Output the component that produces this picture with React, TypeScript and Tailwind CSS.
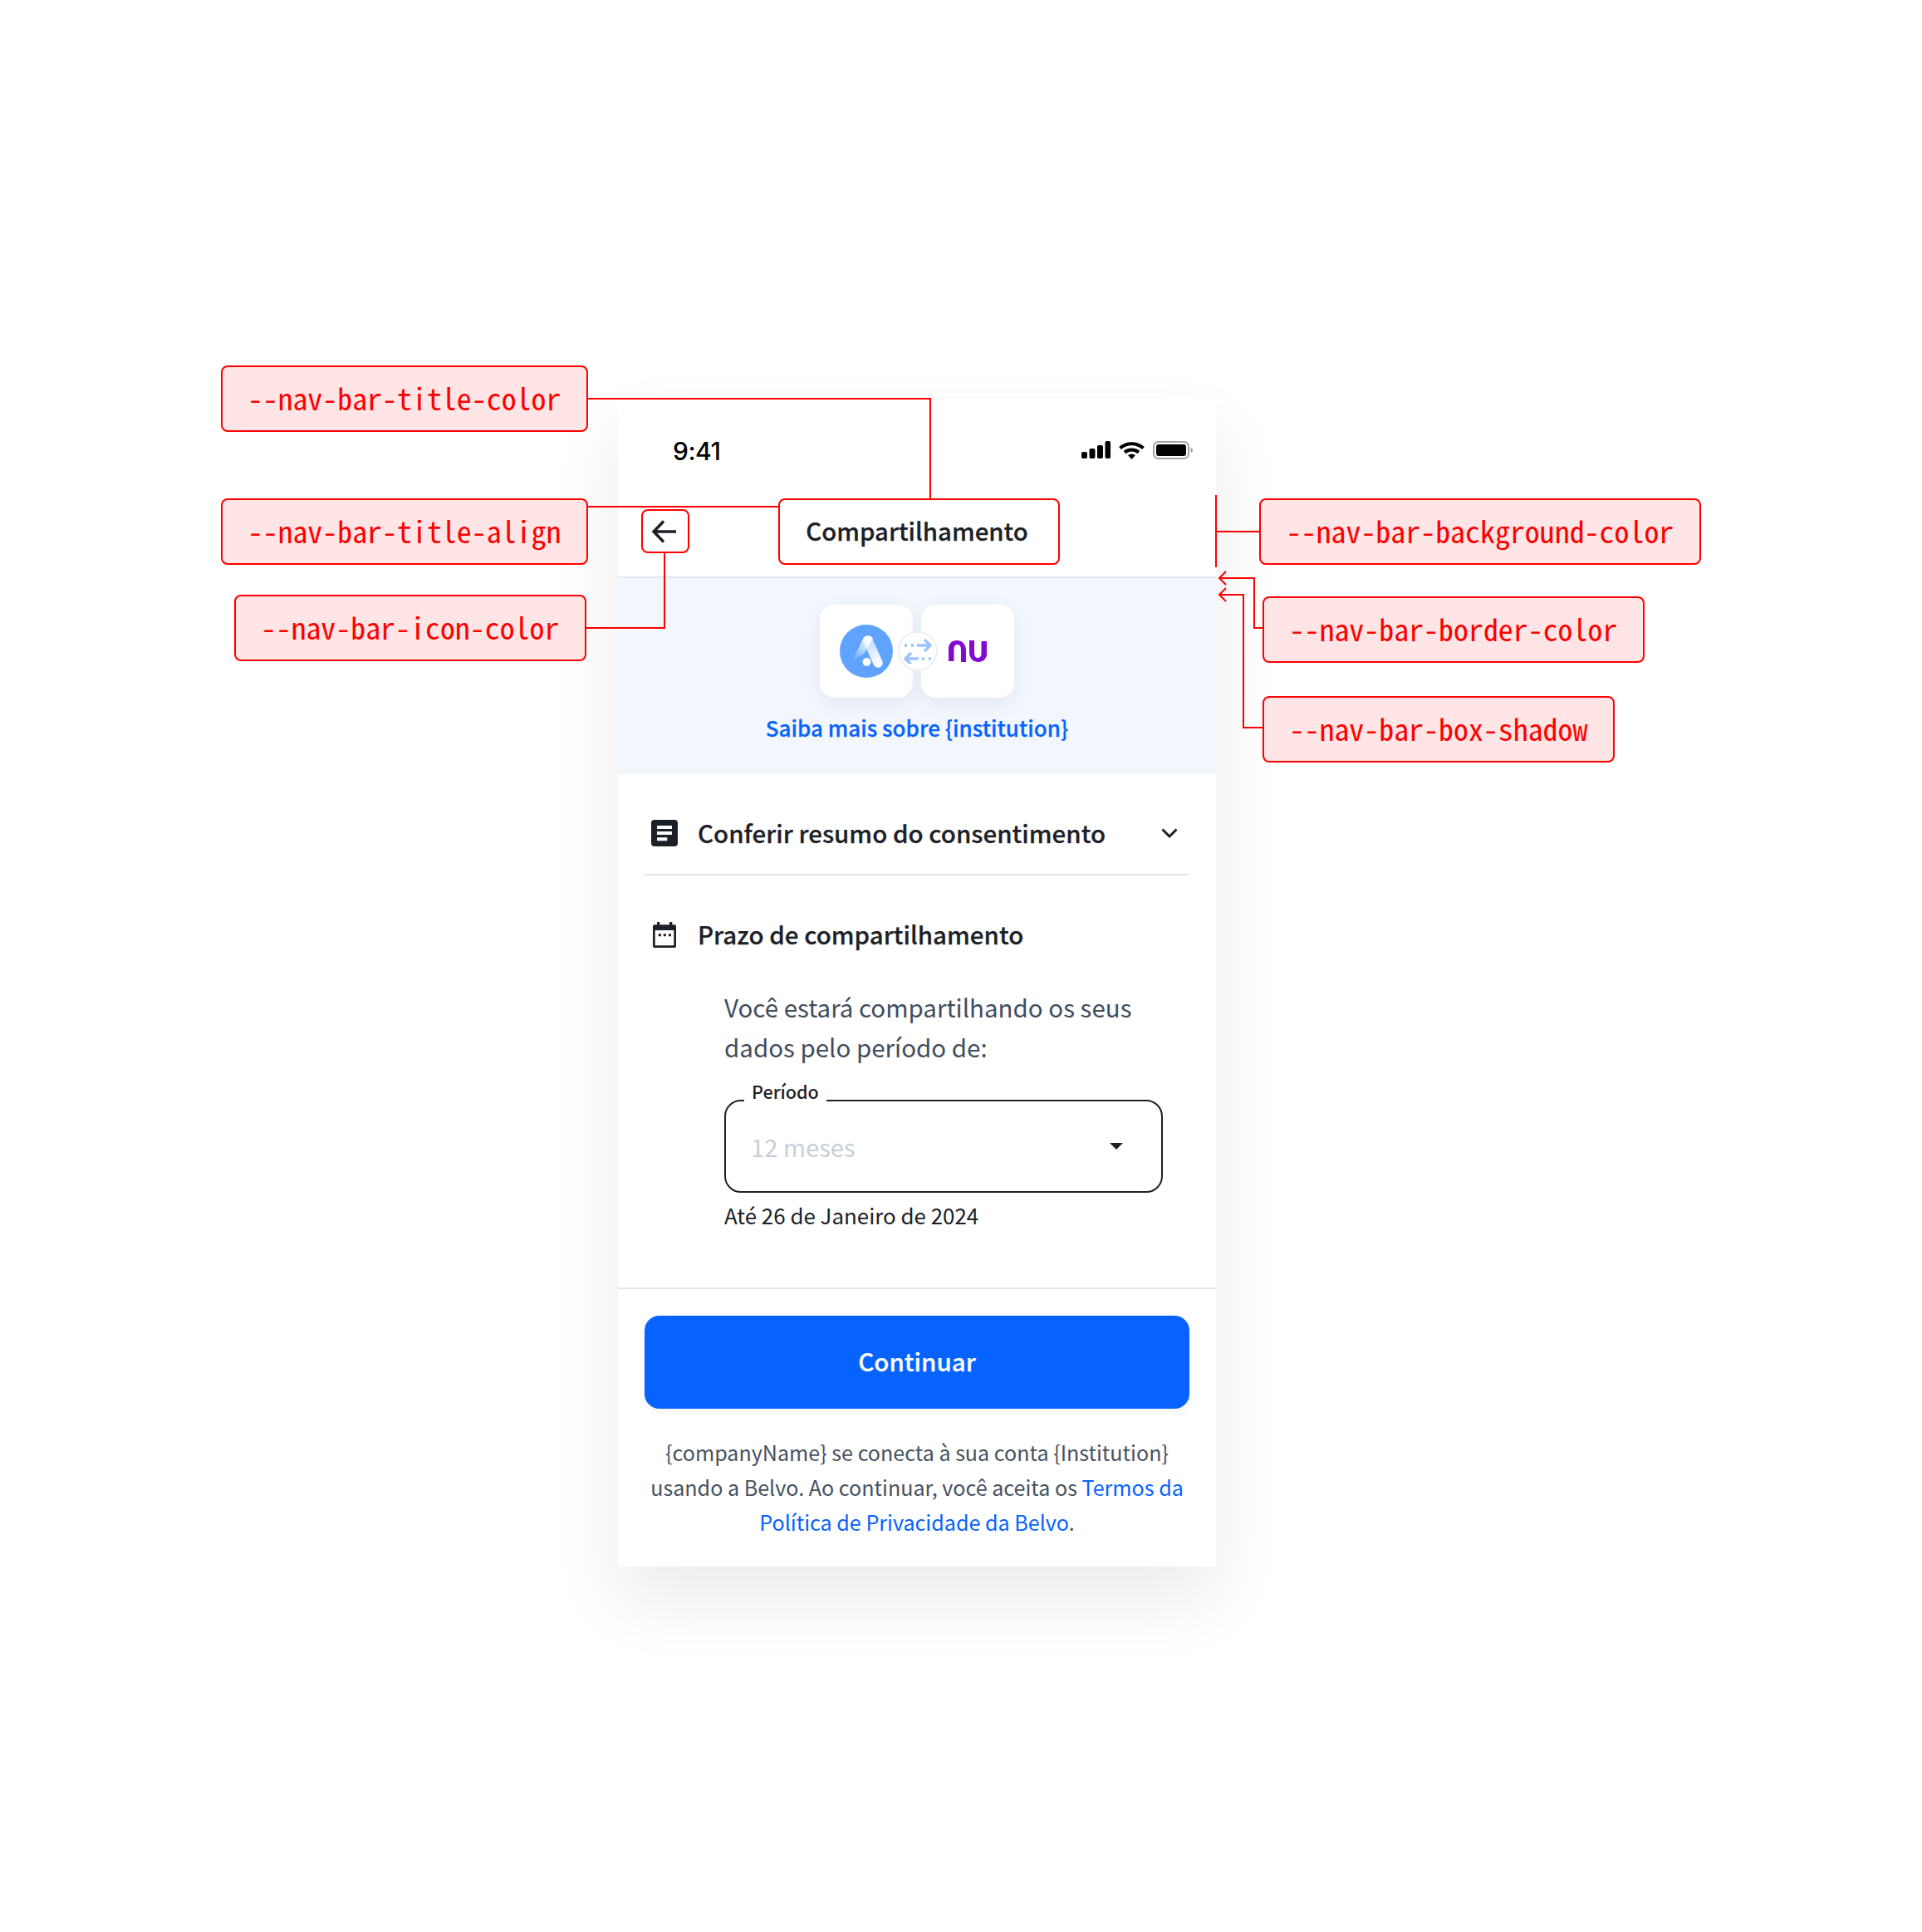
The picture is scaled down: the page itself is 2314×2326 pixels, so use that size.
const sans = "font-['Noto_Sans_CJK_SC','Noto_Sans',sans-serif]";
const heading = "font-medium [-webkit-text-stroke:0.25px_currentColor]";

function Label({ className, children }: { className: string; children: string }) {
  return (
    <div
      className={`absolute flex items-center justify-center rounded-lg border-2 border-[#ff0000] bg-[#ffe5e5] pb-[2px] font-['Noto_Sans_Mono_CJK_SC','Liberation_Mono',monospace] text-[35.9px] font-medium text-[#ff0000] ${className}`}
    >
      {children}
    </div>
  );
}

function StatusIcons() {
  return (
    <div className="mt-[1px] flex items-center gap-[10px]">
      <svg width="35" height="22" viewBox="0 0 35 22" fill="#000">
        <rect x="0" y="13" width="7" height="8" rx="2" />
        <rect x="9.5" y="9" width="7" height="12" rx="2" />
        <rect x="19" y="5" width="7" height="16" rx="2" />
        <rect x="28.5" y="0" width="6.5" height="21" rx="2" />
      </svg>
      <svg width="31" height="22" viewBox="0 0 31 22">
        <path d="M1.5 8.5 C9.5 1.5 21.5 1.5 29.5 8.5" fill="none" stroke="#000" strokeWidth="4.2" />
        <path d="M7 13.5 C12 9.5 19 9.5 24 13.5" fill="none" stroke="#000" strokeWidth="4.2" />
        <path d="M11 17 C14 15 17 15 20 17 L15.5 22 Z" fill="#000" />
      </svg>
      <svg width="48" height="22" viewBox="0 0 48 22">
        <rect x="1" y="1" width="42" height="20" rx="5.5" fill="none" stroke="#a3a3a3" strokeWidth="2" />
        <rect x="4" y="4" width="36" height="14" rx="3" fill="#000" />
        <path d="M45.5 8 C47.5 8.5 48 9.5 48 11 C48 12.5 47.5 13.5 45.5 14 Z" fill="#a3a3a3" />
      </svg>
    </div>
  );
}

function ProductLogo() {
  return (
    <svg width="64" height="64" viewBox="0 0 64 64">
      <defs>
        <linearGradient id="wedge" x1="33" y1="16" x2="16" y2="44" gradientUnits="userSpaceOnUse">
          <stop offset="0" stopColor="#fff" stopOpacity="0.95" />
          <stop offset="1" stopColor="#fff" stopOpacity="0" />
        </linearGradient>
        <linearGradient id="leg" x1="33" y1="16" x2="46" y2="47" gradientUnits="userSpaceOnUse">
          <stop offset="0" stopColor="#fff" stopOpacity="0.55" />
          <stop offset="1" stopColor="#fff" />
        </linearGradient>
      </defs>
      <circle cx="32" cy="32" r="32" fill="#5fa3ff" />
      <path d="M28 17 C30 12 38 12 40 17 L29 35 L15 44 Z" fill="url(#wedge)" />
      <path d="M34 19 L46 46" stroke="url(#leg)" strokeWidth="11.5" strokeLinecap="round" fill="none" />
      <circle cx="32.5" cy="45" r="5" fill="#fff" />
    </svg>
  );
}

function NuLogo() {
  const arch = "M0 25 V10 C0 4 4 0 10 0 C17 0 21 5 21 12 V26 H15 V11 C15 7 13.5 5 11 5 C8 5 6.5 7 6.5 10 V25 Z";
  return (
    <svg width="46" height="26" viewBox="0 0 46 26" fill="#820ad1">
      <path d={arch} />
      <path d={arch} transform="rotate(180 23 13)" />
    </svg>
  );
}

function ExchangeBadge() {
  return (
    <div className="absolute left-[94px] top-[32px] flex h-[48px] w-[48px] items-center justify-center rounded-full border-2 border-[#edf0f3] bg-white">
      <svg width="34" height="30" viewBox="0 0 34 30" fill="none" stroke="#9cc2ff" strokeWidth="3.4">
        <path d="M1 8 h3 M9 8 h3" />
        <path d="M16 8 H32 M25 1 L32 8 L25 15" />
        <path d="M33 24 h-3 M25 24 h-3" />
        <path d="M18 24 H2 M9 17 L2 24 L9 31" />
      </svg>
    </div>
  );
}

function Overlay() {
  return (
    <svg className="pointer-events-none absolute inset-0" width="2314" height="2326" fill="none" stroke="#ff0000" strokeWidth="2">
      <path d="M707 480 H1120 V601" />
      <path d="M707 610 H937" />
      <path d="M800 665 V756 H705" />
      <path d="M1464 596 V683 M1464 640 H1517" />
      <path d="M1521 756 H1510 V696 H1468 M1476 688 L1468 696 L1476 704" />
      <path d="M1521 876 H1497 V716 H1468 M1476 708 L1468 716 L1476 724" />
    </svg>
  );
}

export default function App() {
  return (
    <div className={`relative h-[2326px] w-[2314px] overflow-hidden bg-white pl-[744px] pt-[480px] ${sans}`}>
      <div className="flex h-[1406px] w-[720px] flex-col bg-white shadow-[0_40px_80px_rgba(0,0,0,0.08)]">
        <div className="flex h-[120px] items-start justify-between pl-[66px] pr-[28px] pt-[50px]">
          <span className="font-['Inter',sans-serif] text-[30px] font-medium leading-[26px] tracking-[-0.5px] text-black">9:41</span>
          <StatusIcons />
        </div>
        <div className="relative flex h-[96px] items-center justify-center border-b-2 border-[#e3e7ed]">
          <svg className="absolute left-[40px] top-[24px]" width="32" height="32" viewBox="0 0 32 32" fill="none" stroke="#1c2127" strokeWidth="3.4">
            <path d="M30 16 H4 M15 3.5 L3 16 L15 28.5" />
          </svg>
          <span className={`pb-[19px] text-[29.4px] leading-[48px] text-[#1c2127] ${heading}`}>Compartilhamento</span>
        </div>
        <div className="flex h-[236px] flex-col items-center bg-[#f3f7fd] pt-[32px]">
          <div className="relative flex gap-[10px]">
            <div className="flex h-[112px] w-[112px] items-center justify-center rounded-[18px] bg-white shadow-[0_8px_24px_rgba(30,60,110,0.08)]">
              <ProductLogo />
            </div>
            <div className="flex h-[112px] w-[112px] items-center justify-center rounded-[18px] bg-white shadow-[0_8px_24px_rgba(30,60,110,0.08)]">
              <NuLogo />
            </div>
            <ExchangeBadge />
          </div>
          <a className={`mt-[15px] text-[26px] leading-[42px] text-[#0663ff] ${heading}`}>Saiba mais sobre {"{institution}"}</a>
        </div>
        <div className="mx-[32px] flex h-[122px] items-center justify-between border-b-2 border-[#e3e7ed] pl-[8px] pr-[14px] pt-[22px]">
          <div className="flex items-center gap-[24px]">
            <svg width="32" height="32" viewBox="0 0 32 32">
              <rect width="32" height="32" rx="4" fill="#1c2127" />
              <path d="M7 9 H25 M7 16 H25 M7 23.3 H19.3" stroke="#fff" strokeWidth="4" />
            </svg>
            <span className={`pb-[2px] text-[29.5px] leading-[48px] text-[#1c2127] ${heading}`}>Conferir resumo do consentimento</span>
          </div>
          <svg width="20" height="12" viewBox="0 0 20 12" fill="none" stroke="#1c2127" strokeWidth="3">
            <path d="M1.5 1.5 L10 10 L18.5 1.5" />
          </svg>
        </div>
        <div className="flex flex-col pl-[40px] pr-[65px] pt-[46px]">
          <div className="flex items-center gap-[26px] pl-[2px]">
            <svg width="28" height="31" viewBox="0 0 28 31">
              <path d="M2 3.3 H26 A2 2 0 0 1 28 5.3 V29 A2 2 0 0 1 26 31 H2 A2 2 0 0 1 0 29 V5.3 A2 2 0 0 1 2 3.3 Z M2.7 10 V28.3 H25.3 V10 Z" fill="#1c2127" fillRule="evenodd" />
              <rect x="5" y="0" width="3.3" height="5" fill="#1c2127" />
              <rect x="20" y="0" width="3.3" height="5" fill="#1c2127" />
              <path d="M6.7 15.7 h3.3 M12.8 15.7 h3 M19 15.7 h3" stroke="#1c2127" strokeWidth="3" />
            </svg>
            <span className={`pb-[2px] text-[29.5px] leading-[48px] text-[#1c2127] ${heading}`}>Prazo de compartilhamento</span>
          </div>
          <div className="ml-[88px] mt-[38px] flex flex-col">
            <p className="whitespace-nowrap text-[29.5px] leading-[48px] text-[#3f4d5e]">
              Você estará compartilhando os seus
              <br />
              dados pelo período de:
            </p>
            <div className="relative mt-[40px] flex h-[112px] w-[528px] items-center justify-between rounded-[20px] border-2 border-[#1c2127] pl-[30px] pr-[46px]">
              <span className="absolute left-[22px] top-[-30px] bg-white px-[9px] text-[21.6px] font-medium leading-[36px] text-[#1c2127]">Período</span>
              <span className="text-[29.2px] leading-[48px] text-[#c5d0da]">12 meses</span>
              <svg width="16" height="8" viewBox="0 0 16 8" fill="#1c2127">
                <path d="M0 0 H16 L8 8 Z" />
              </svg>
            </div>
            <span className="mt-[6px] text-[25.9px] leading-[42px] text-[#1c2127]">Até 26 de Janeiro de 2024</span>
          </div>
        </div>
        <div className="mt-auto flex flex-col items-center border-t-2 border-[#e3e7ed] px-[32px] pt-[32px]">
          <button className={`flex h-[112px] w-full items-center justify-center rounded-[18px] bg-[#0663ff] pb-[5px] text-[29.5px] leading-[48px] text-white shadow-[0_4px_8px_rgba(0,0,0,0.05)] ${heading}`}>
            Continuar
          </button>
          <p className="mb-[33px] mt-[31px] whitespace-nowrap text-center text-[25.1px] leading-[42px] text-[#46525f]">
            {"{companyName}"} se conecta à sua conta {"{Institution}"}
            <br />
            usando a Belvo. Ao continuar, você aceita os <a className="text-[#0663ff]">Termos da</a>
            <br />
            <a className="text-[#0663ff]">Política de Privacidade da Belvo</a>.
          </p>
        </div>
      </div>
      <Overlay />
      <div className="pointer-events-none absolute left-[937px] top-[600px] h-[80px] w-[339px] rounded-lg border-2 border-[#ff0000]" />
      <div className="pointer-events-none absolute left-[772px] top-[613px] h-[53px] w-[58px] rounded-lg border-2 border-[#ff0000]" />
      <Label className="left-[266px] top-[440px] h-[80px] w-[442px]">--nav-bar-title-color</Label>
      <Label className="left-[266px] top-[600px] h-[80px] w-[442px]">--nav-bar-title-align</Label>
      <Label className="left-[282px] top-[716px] h-[80px] w-[424px]">--nav-bar-icon-color</Label>
      <Label className="left-[1516px] top-[600px] h-[80px] w-[532px]">--nav-bar-background-color</Label>
      <Label className="left-[1520px] top-[718px] h-[80px] w-[460px]">--nav-bar-border-color</Label>
      <Label className="left-[1520px] top-[838px] h-[80px] w-[424px]">--nav-bar-box-shadow</Label>
    </div>
  );
}
